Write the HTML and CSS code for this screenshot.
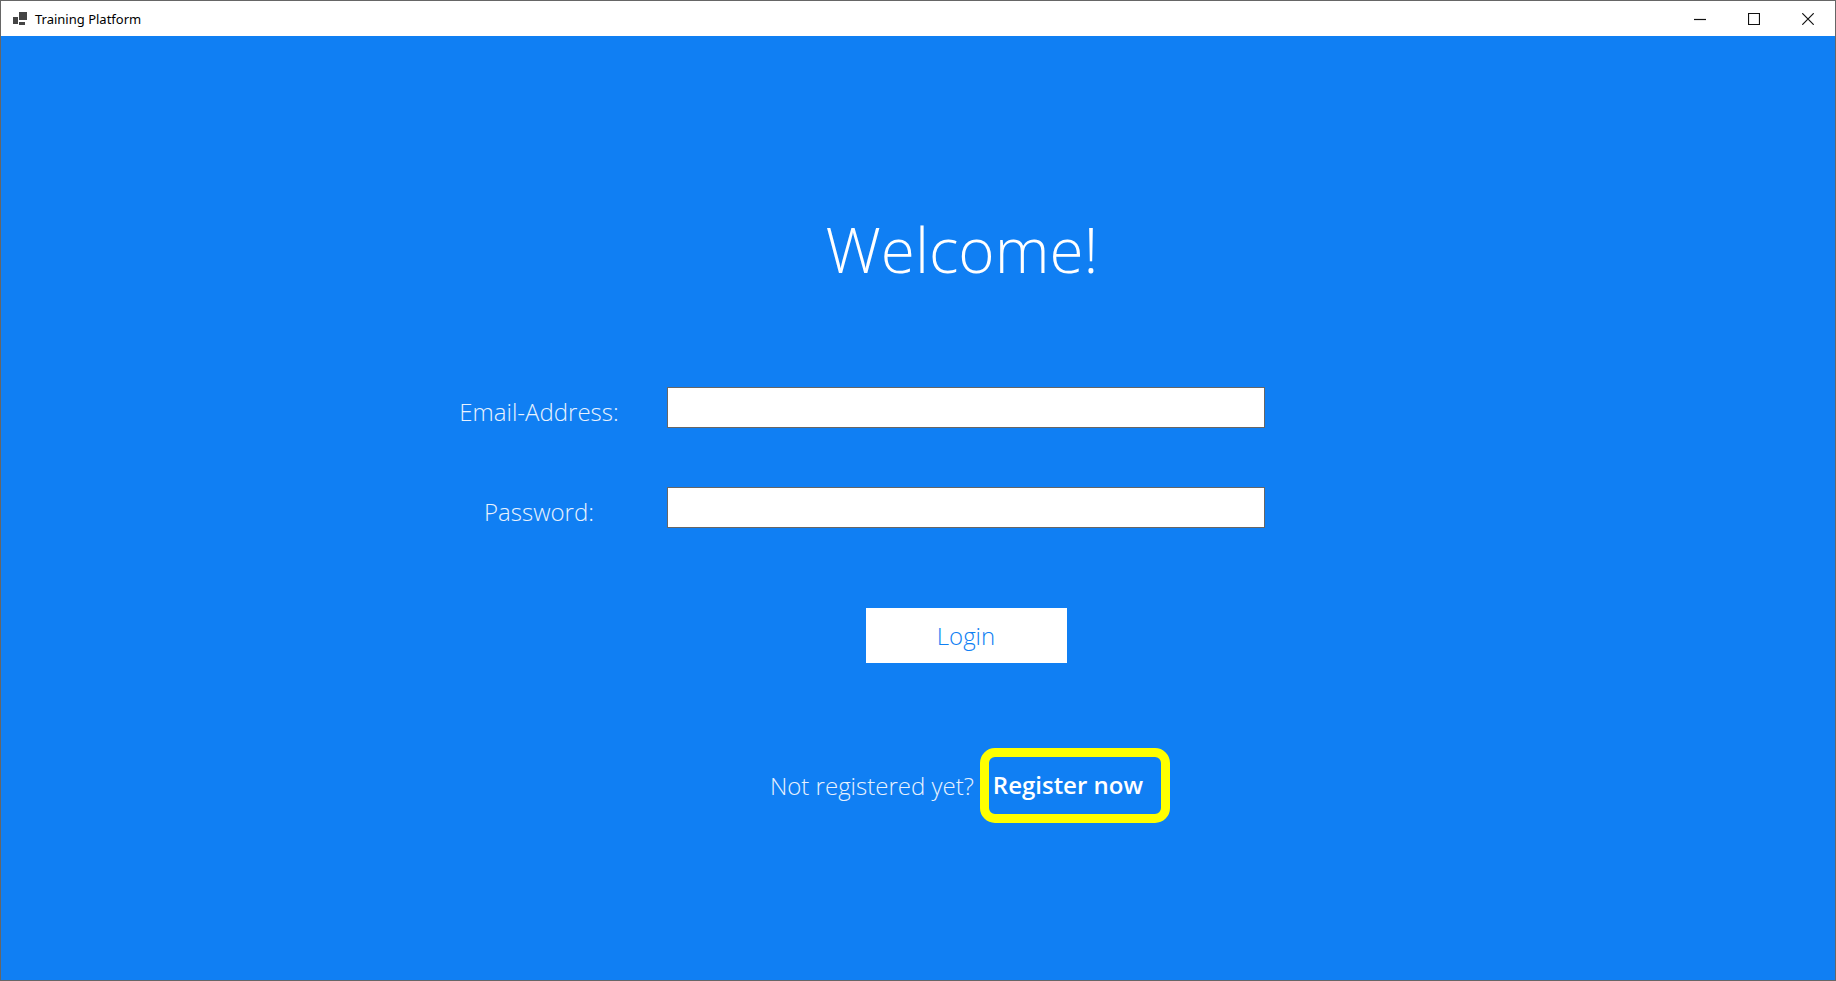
FILE: index.html
```html
<!DOCTYPE html>
<html lang="en">
<head>
<meta charset="utf-8">
<title>Training Platform</title>
<link rel="stylesheet" href="styles.css">
</head>
<body>
<div class="window">
  <header class="titlebar">
    <svg class="app-icon" width="14" height="14" viewBox="0 0 14 14" fill="#444" aria-hidden="true">
      <rect x="6" y="0" width="8" height="8"/><rect x="0" y="5" width="5" height="7"/><rect x="6" y="10" width="6" height="3"/>
    </svg>
    <span class="app-title">Training Platform</span>
    <div class="controls">
      <button class="control" type="button" aria-label="Minimize">
        <svg width="12" height="12" viewBox="0 0 12 12"><path d="M0 6.5H12"/></svg>
      </button>
      <button class="control" type="button" aria-label="Maximize">
        <svg width="12" height="12" viewBox="0 0 12 12"><path d="M.5 .5H11.5V11.5H.5Z"/></svg>
      </button>
      <button class="control" type="button" aria-label="Close">
        <svg width="12" height="12" viewBox="0 0 12 12"><path d="M.3 .3L11.7 11.7M11.7 .3L.3 11.7"/></svg>
      </button>
    </div>
  </header>
  <main class="content">
    <h1 class="heading">Welcome!</h1>
    <form class="login">
      <div class="field">
        <label class="label" for="email">Email-Address:</label>
        <input class="input" id="email" type="email">
      </div>
      <div class="field">
        <label class="label" for="password">Password:</label>
        <input class="input" id="password" type="password">
      </div>
      <button class="submit" type="submit">Login</button>
    </form>
    <p class="signup">Not registered yet? <a class="register" href="#register">Register now</a></p>
  </main>
</div>
</body>
</html>
```
FILE: styles.css
```css
* { box-sizing: border-box; }
body {
  margin: 0;
  font-family: "Open Sans", "Noto Sans", sans-serif;
}
.window {
  display: flex;
  flex-direction: column;
  min-height: 100vh;
  border: 1px solid #666;
  background: #107ff3;
}
.titlebar {
  display: flex;
  align-items: center;
  height: 35px;
  padding-left: 12px;
  background: #fff;
}
.app-title {
  margin-left: 8px;
  font-family: "Noto Sans", sans-serif;
  font-size: 13px;
  line-height: 16px;
  color: #000;
}
.controls { display: flex; margin-left: auto; }
.control {
  display: grid;
  place-items: center;
  width: 54px;
  height: 34px;
  padding: 0;
  border: 0;
  background: none;
}
.control path { fill: none; stroke: #111; stroke-width: 1.2; }
.content {
  padding-left: 96px;
  color: #fff;
  font-size: 24px;
  font-weight: 300;
  line-height: 32px;
}
.heading {
  margin: 169px 0 94px;
  padding-right: 8px;
  font-size: 62px;
  font-weight: 300;
  line-height: 88px;
  text-align: center;
}
.login {
  display: flex;
  flex-direction: column;
  align-items: center;
}
.field {
  display: grid;
  grid-template-columns: 1fr 598px 1fr;
  width: 100%;
  margin-bottom: 59px;
}
.label {
  justify-self: end;
  width: 160px;
  margin: 9px 48px 0 0;
  text-align: center;
  white-space: nowrap;
  color: #e8f2fe;
}
.input {
  height: 41px;
  padding: 0 8px;
  border: 1px solid #666;
  border-radius: 0;
  font: inherit;
  outline: 0;
}
.submit {
  width: 201px;
  height: 55px;
  margin-top: 21px;
  border: 0;
  background: #fff;
  color: #107ff3;
  font: inherit;
}
.signup {
  display: flex;
  justify-content: center;
  align-items: center;
  gap: 6px;
  margin: 85px 0 0;
  padding-left: 8px;
  color: #e8f2fe;
}
.register {
  padding: 12px 18px 13px 4px;
  border: 9px solid #ff0;
  border-radius: 15px;
  color: #fff;
  font-weight: 600;
  text-decoration: none;
}
```
